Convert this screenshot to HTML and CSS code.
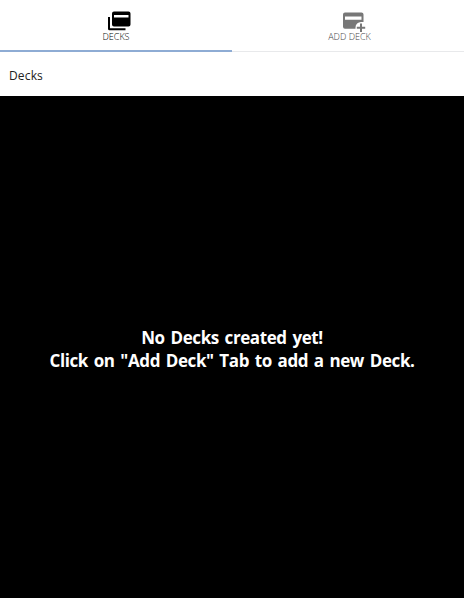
FILE: index.html
```html
<!DOCTYPE html>
<html lang="en">
<head>
<meta charset="utf-8">
<title>Decks</title>
<link rel="stylesheet" href="styles.css">
</head>
<body>
<nav class="tabs">
  <a class="tab active">
    <svg class="icon" viewBox="0 0 24 22"><path fill-rule="evenodd" d="M0 6h2v11.300h15.500v2H1.500A1.500 1.500 0 0 1 0 17.800zM6 .500h14.500a2 2 0 0 1 2 2V13.500a2 2 0 0 1-2 2H6a2 2 0 0 1-2-2V2.500a2 2 0 0 1 2-2zM6 4v2.500h14.500V4z"/></svg>
    <span class="label">DECKS</span>
  </a>
  <a class="tab add">
    <svg class="icon" viewBox="0 0 24 22"><path fill-rule="evenodd" d="M3 1.500h16.500a2 2 0 0 1 2 2V11h-2.500a5.500 5.500 0 0 0-5.500 5.500v1.300H3a2 2 0 0 1-2-2V3.500a2 2 0 0 1 2-2zM3 5.500v3.200h16.500V5.500zM18 12.500h2v3.200h3.200v2H20v3.200h-2v-3.200h-3.200v-2H18z"/></svg>
    <span class="label">ADD DECK</span>
  </a>
</nav>
<header class="header">Decks</header>
<main class="empty"><p class="message">No Decks created yet!<br>Click on "Add Deck" Tab to add a new Deck.</p></main>
</body>
</html>
```
FILE: styles.css
```css
* { box-sizing: border-box; }
body { margin: 0; height: 598px; display: flex; flex-direction: column; font-family: "Open Sans", sans-serif; background: #fff; }
.tabs { display: flex; height: 52px; border-bottom: 1px solid #e8e9eb; }
.tab { width: 50%; height: 52px; display: flex; flex-direction: column; align-items: center; padding-top: 11px; color: #777; border-bottom: 2px solid transparent; }
.active { color: #000; border-color: #8eacd4; }
.active .icon { margin-left: 7px; }
.add { padding-left: 3px; }
.add .icon { margin-left: 8px; }
.icon { width: 24px; height: 22px; fill: currentColor; }
.label { margin-top: -2px; font-size: 9px; line-height: 12px; font-weight: 300; color: #000; }
.add .label { color: #444; }
.header { height: 44px; padding-left: 9px; font-size: 12px; line-height: 47px; letter-spacing: 0.15px; color: #222; }
.empty { flex: 1; background: #000; color: #fff; display: flex; align-items: center; justify-content: center; }
.message { margin: 4px 0 0; font-weight: 700; font-size: 17px; line-height: 23px; letter-spacing: -0.4px; word-spacing: 1.7px; text-align: center; white-space: nowrap; }
```
